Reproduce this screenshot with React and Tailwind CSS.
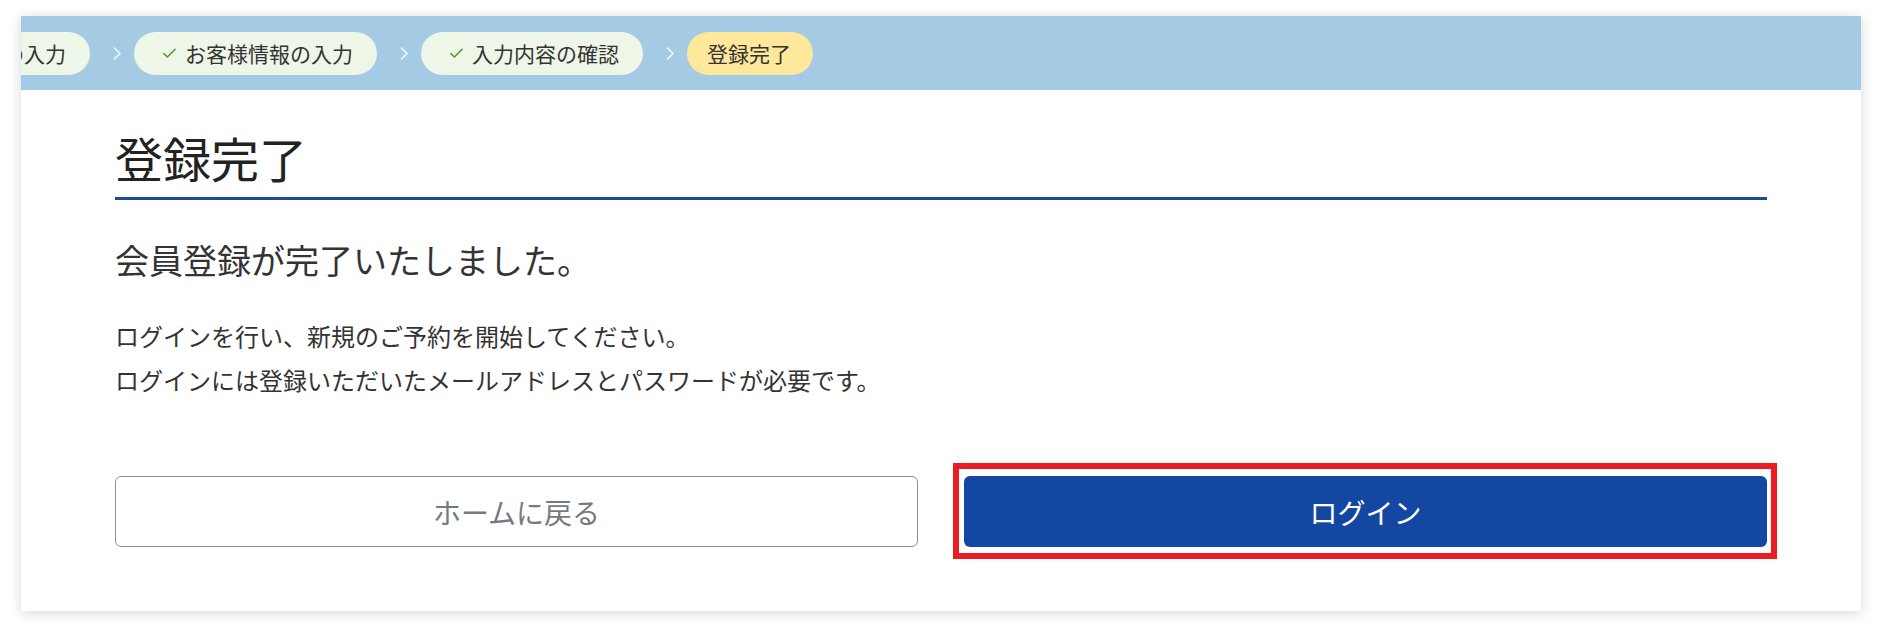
import { Check } from 'lucide-react';

const FONT = { fontFamily: '"Noto Sans CJK JP", "Noto Sans", sans-serif' };

// Steps of the sign-up flow; the bar is scrolled so the first one is cut off.
const STEPS = [
  { label: 'メールアドレスの入力', done: true },
  { label: 'お客様情報の入力', done: true },
  { label: '入力内容の確認', done: true },
  { label: '登録完了', done: false },
];

function Chevron() {
  return (
    <svg width="9" height="15" viewBox="0 0 9 15" className="ml-[23px] mr-[12px] shrink-0">
      <polyline points="1.5,2 7,7.5 1.5,13" fill="none" stroke="#f4f8fb" strokeWidth="1.6" strokeLinecap="round" strokeLinejoin="round" />
    </svg>
  );
}

function StepPill({ step, first }) {
  const base = 'flex h-[43px] shrink-0 items-center rounded-full text-[21px] leading-none text-[#333]';
  if (!step.done) {
    return <div className={`${base} bg-[#fde89c] pl-[20px] pr-[22px]`}>{step.label}</div>;
  }
  return (
    <div className={`${base} bg-[#eef6e7] pl-[27px] pr-[24px] ${first ? 'w-[260px] justify-end' : ''}`}>
      <Check size={17} strokeWidth={2.2} className="mr-[7px] shrink-0 text-[#4a9a30]" />
      <span className="whitespace-nowrap">{step.label}</span>
    </div>
  );
}

export default function App() {
  return (
    <div className="min-h-screen bg-white pt-[16px] pb-[27px]" style={FONT}>
      <div className="mx-[21px] bg-white shadow-[0_2px_12px_rgba(0,0,0,0.16)]">
        {/* step bar */}
        <div className="flex h-[74px] items-center overflow-hidden bg-[#a4cbe3]">
          <div className="-ml-[191px] flex items-center">
            {STEPS.map((s, i) => (
              <div key={s.label} className="flex items-center">
                {i > 0 && <Chevron />}
                <StepPill step={s} first={i === 0} />
              </div>
            ))}
          </div>
        </div>

        <div className="px-[94px] pt-[37px] pb-[64px]">
          <h1 className="border-b-[3px] border-[#1d4a9c] pb-[10px] text-[48px] leading-[60px] font-normal text-[#222]">
            登録完了
          </h1>

          <p className="mt-[36px] text-[34px] leading-[48px] text-[#333]">会員登録が完了いたしました。</p>

          <div className="mt-[30px] text-[24px] leading-[44px] text-[#333]">
            <p>ログインを行い、新規のご予約を開始してください。</p>
            <p>ログインには登録いただいたメールアドレスとパスワードが必要です。</p>
          </div>

          <div className="mt-[74px] grid grid-cols-2 gap-[46px]">
            <button
              type="button"
              className="flex h-[71px] items-center justify-center rounded-[6px] border-[1.5px] border-[#8c9197] bg-white text-[28px] text-[#737a82]"
            >
              ホームに戻る
            </button>
            <div className="relative">
              <button
                type="button"
                className="flex h-[71px] w-full items-center justify-center rounded-[6px] bg-[#1447a1] text-[28px] text-white"
              >
                ログイン
              </button>
              {/* highlight annotation */}
              <div className="pointer-events-none absolute -top-[13px] -bottom-[12px] -left-[11px] -right-[10px] border-[6px] border-[#ec1c24]" />
            </div>
          </div>
        </div>
      </div>
    </div>
  );
}
